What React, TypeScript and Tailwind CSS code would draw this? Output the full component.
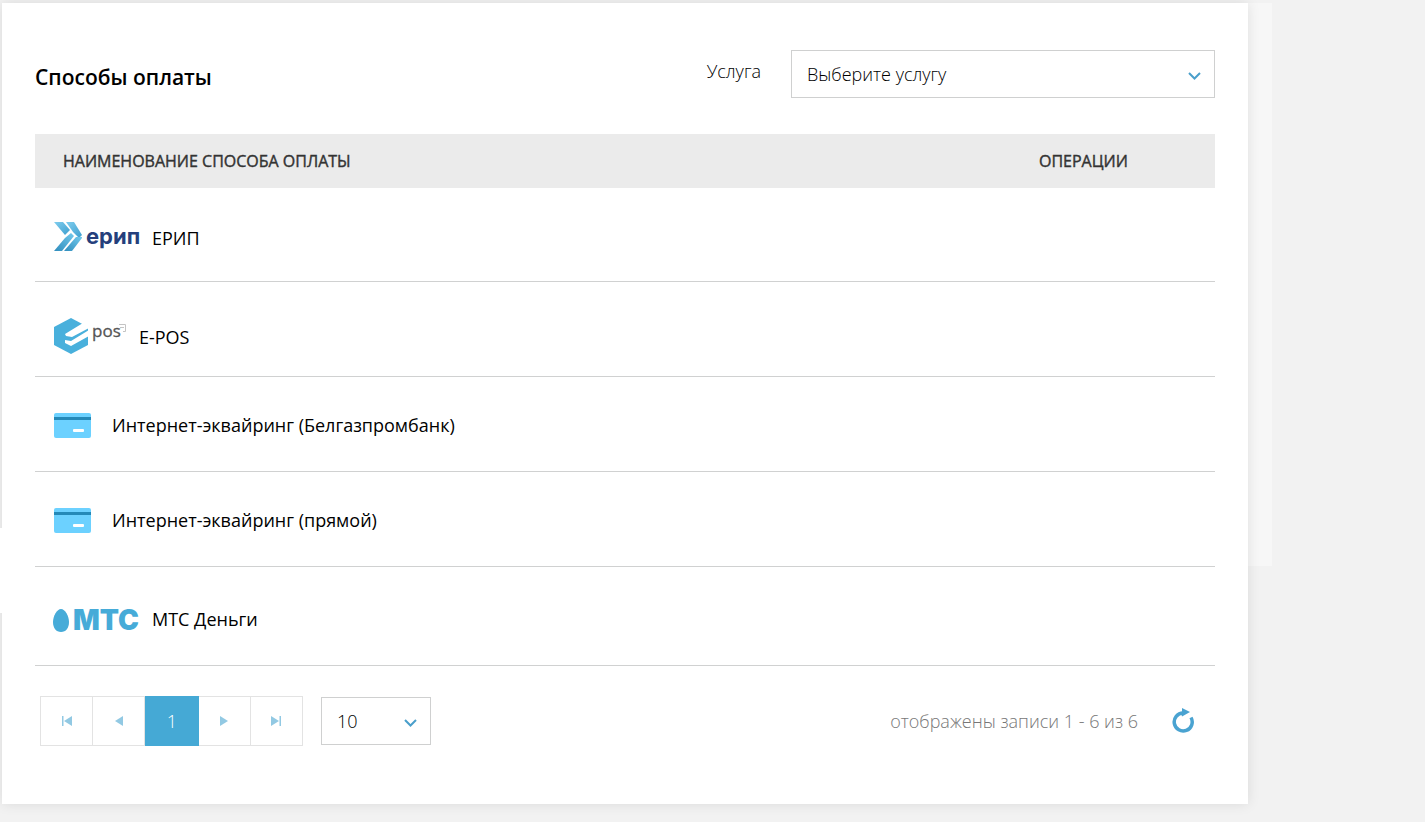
import type { ReactNode } from 'react'
import clsx from 'clsx'

function EripLogo() {
  return (
    <svg width="88" height="32" viewBox="0 0 88 32" aria-hidden="true">
      <defs>
        <linearGradient id="erip" x1="0" y1="0" x2="1" y2="1">
          <stop offset="0" stopColor="#7fcdee" />
          <stop offset="1" stopColor="#3d9fcf" />
        </linearGradient>
        <linearGradient id="eripLow" x1="0" y1="1" x2="1" y2="0">
          <stop offset="0" stopColor="#2f8dbd" />
          <stop offset="1" stopColor="#73c9ec" />
        </linearGradient>
      </defs>
      <path d="M2 0h9l7 8-5 5z" fill="url(#erip)" />
      <path d="M14 0h8l8 13-3 3-6-6z" fill="url(#erip)" />
      <path d="M2 29l11-13 6-5 3 3-12 15z" fill="url(#eripLow)" />
      <path d="M12 29l12-14h6v1L20 29z" fill="url(#eripLow)" />
      <text x="34" y="22" fontSize="22" fontWeight="700" fill="#253f7c" fontFamily="Inter, sans-serif">
        ерип
      </text>
    </svg>
  )
}

function EposLogo() {
  return (
    <svg width="75" height="38" viewBox="0 0 75 38" aria-hidden="true">
      <path d="M19 0l17 9v18l-17 9-17-9V9z" fill="#49b0dc" />
      <path d="M31 5l6 3v2L20 19l-6-1 -1-2zM37 12v6L19 28l-6-3v-3l6 1z" fill="#fff" />
      <text x="40" y="19" fontSize="17" fill="#555" stroke="#555" strokeWidth="0.3" fontFamily="Open Sans, sans-serif">
        pos
      </text>
      <path d="M67 6.500h6.500v7H71M68 9.500h4" fill="none" stroke="#c4c4c4" />
    </svg>
  )
}

function CardLogo() {
  return (
    <svg width="48" height="26" viewBox="0 0 48 26" aria-hidden="true">
      <rect x="2" y="1" width="37" height="25" rx="2" fill="#6cd1ff" />
      <path d="M2 5h37v3H2z" fill="#2489b8" />
      <rect x="21" y="17" width="11" height="3" rx="1" fill="#fff" />
    </svg>
  )
}

function MtsLogo() {
  return (
    <svg width="88" height="38" viewBox="0 0 88 38" aria-hidden="true">
      <path d="M9 9c4 0 8 7 8 13s-3 10-8 10-8-4-8-10S5 9 9 9z" fill="#46abd8" />
      <text x="21" y="30" fontSize="28" fontWeight="900" fill="#46abd8" fontFamily="Inter, sans-serif">
        МТС
      </text>
    </svg>
  )
}

function Chevron() {
  return (
    <svg
      className="pointer-events-none absolute top-5 right-3.5 mt-0.5"
      width="13"
      height="8"
      viewBox="0 0 13 8"
      fill="none"
      stroke="#4a9fcb"
      strokeWidth="2"
      aria-hidden="true"
    >
      <path d="M1 1l5.500 5.500L12 1" />
    </svg>
  )
}

function RefreshIcon() {
  return (
    <svg width="24" height="26" viewBox="0 0 24 26" aria-hidden="true">
      <path d="M20 9.500A9 9 0 1 1 12 5" fill="none" stroke="#4aa3d1" strokeWidth="3.500" />
      <path d="M11 0v3.500L10 5l1 3.500 8-4.500z" fill="#4aa3d1" />
    </svg>
  )
}

const methods: { name: string; logo: ReactNode; cell: string }[] = [
  { name: 'ЕРИП', logo: <EripLogo />, cell: 'h-[94px] pt-1.5' },
  { name: 'E-POS', logo: <EposLogo />, cell: 'h-[95px] pt-4' },
  { name: 'Интернет-эквайринг (Белгазпромбанк)', logo: <CardLogo />, cell: 'h-[95px] pt-0.5' },
  { name: 'Интернет-эквайринг (прямой)', logo: <CardLogo />, cell: 'h-[95px] pt-0.5' },
  { name: 'МТС Деньги', logo: <MtsLogo />, cell: 'h-[99px] pt-1.5' },
]

const pages: { label: string; content: ReactNode; active?: boolean }[] = [
  { label: 'Первая страница', content: <path d="M0 0h1.500v10H0zM10 0v10L2 5z" /> },
  { label: 'Предыдущая страница', content: <path d="M9 0v10L1 5z" /> },
  { label: '1', content: '1', active: true },
  { label: 'Следующая страница', content: <path d="M1 0v10l8-5z" /> },
  { label: 'Последняя страница', content: <path d="M8.500 0H10v10H8.500zM0 0v10l8-5z" /> },
]

export default function App() {
  return (
    <div className="min-h-screen bg-[#f2f2f2] pt-[3px] pr-[177px] pb-[18px] pl-[2px] font-['Open_Sans',sans-serif] text-lg font-light text-black">
      <div className="relative">
        <div className="absolute top-0 left-full h-[563px] w-6 bg-[#f7f7f7]" />
        <main className="relative bg-white px-[33px] pt-[47px] pb-[58px] shadow-[0_0_12px_rgba(0,0,0,0.1)]">
          <div className="absolute top-[525px] right-full h-[85px] w-[2px] bg-white" />

          <header className="flex items-start justify-between pb-9">
            <h1 className="pt-3 text-[21px] leading-[30px] font-semibold">Способы оплаты</h1>
            <div className="flex items-start gap-[30px]">
              <label htmlFor="service" className="pt-[7px]">
                Услуга
              </label>
              <div className="relative w-[424px]">
                <select
                  id="service"
                  className="h-12 w-full appearance-none border border-[#cfd0d0] bg-white px-[15px] outline-none"
                >
                  <option>Выберите услугу</option>
                </select>
                <Chevron />
              </div>
            </div>
          </header>

          <table className="w-full border-collapse text-left">
            <thead>
              <tr className="h-[54px] bg-[#ebebeb] text-base text-[#333] [-webkit-text-stroke:0.4px_#333]">
                <th className="pl-7 font-normal">НАИМЕНОВАНИЕ СПОСОБА ОПЛАТЫ</th>
                <th className="w-[176px] font-normal">ОПЕРАЦИИ</th>
              </tr>
            </thead>
            <tbody>
              {methods.map(({ name, logo, cell }) => (
                <tr key={name} className="font-normal">
                  <td colSpan={2} className="p-0">
                    <div className={clsx('flex items-center gap-3 border-b border-[#d0d1d1] pl-[17px]', cell)}>
                      {logo}
                      <span>{name}</span>
                    </div>
                  </td>
                </tr>
              ))}
            </tbody>
          </table>

          <footer className="flex items-center pt-[30px] pr-5 pl-[5px]">
            <nav className="flex w-[263px]" aria-label="Страницы">
              {pages.map(({ label, content, active }, i) => (
                <button
                  key={label}
                  aria-label={label}
                  className={clsx(
                    'flex h-[50px] flex-1 items-center justify-center border',
                    active ? 'border-[#45a9d5] bg-[#45a9d5] text-white' : 'border-[#e3e3e3] bg-white text-[#92c9e3]',
                    i > 0 && !active && 'border-l-0',
                  )}
                >
                  {active ? (
                    content
                  ) : (
                    <svg width="10" height="10" viewBox="0 0 10 10" fill="currentColor">
                      {content}
                    </svg>
                  )}
                </button>
              ))}
            </nav>
            <div className="relative ml-[18px] w-[110px]">
              <select
                aria-label="Записей на странице"
                className="h-12 w-full appearance-none border border-[#cfd0d0] bg-white px-[15px] outline-none"
              >
                <option>10</option>
              </select>
              <Chevron />
            </div>
            <span className="mr-[33px] ml-auto text-[#777]">отображены записи 1 - 6 из 6</span>
            <button aria-label="Обновить">
              <RefreshIcon />
            </button>
          </footer>
        </main>
      </div>
    </div>
  )
}
